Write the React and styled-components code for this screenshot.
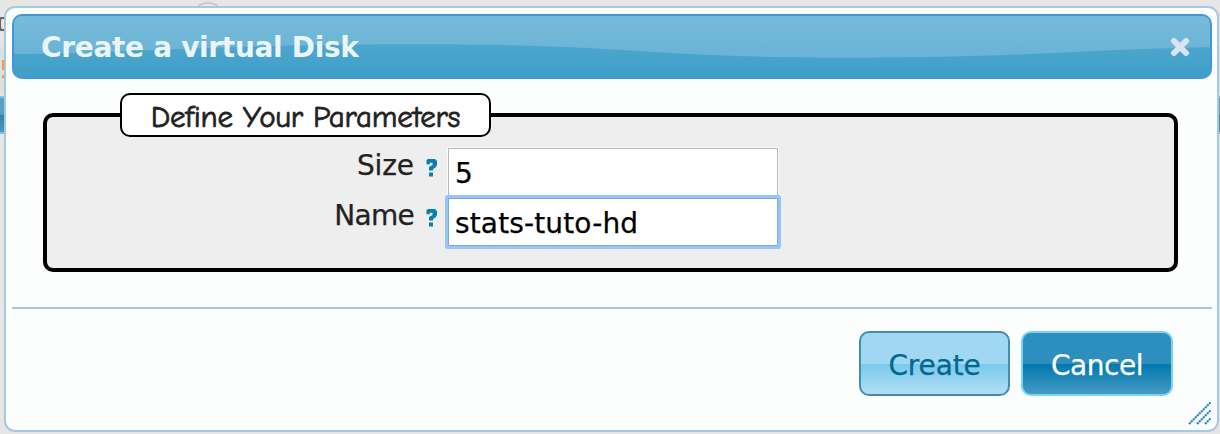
import React from 'react';
import styled, { createGlobalStyle, css } from 'styled-components';

const GlobalStyle = createGlobalStyle`
  * { box-sizing: border-box; }
  body {
    margin: 0;
    background: #e6e6e6;
    font-family: Verdana, "DejaVu Sans", sans-serif;
    overflow: hidden;
  }
`;

const Page = styled.div`
  position: relative;
  height: 434px;
  padding: 6px 1px 2px 4px;
  overflow: hidden;
`;

const Backdrop = styled.div`
  position: absolute;
  inset: 0;
  display: flex;
  flex-direction: column;
  overflow: hidden;
`;

const BackdropRow = styled.div`
  flex: none;
  height: ${(p) => p.$h}px;
  background: ${(p) => p.$bg || 'transparent'};
  border-style: solid;
  border-width: ${(p) => (p.$line ? '2px 0' : '0')};
  border-color: #7cc4e4;
`;

const Dialog = styled.section`
  position: relative;
  display: flex;
  flex-direction: column;
  height: 426px;
  padding: 6px 5px 6px 6px;
  border: 2px solid #a6c9e2;
  border-radius: 11px;
  background: #fcfdfd;
`;

const TitleBar = styled.header`
  position: relative;
  flex: none;
  display: flex;
  align-items: center;
  justify-content: space-between;
  height: 65px;
  padding: 0 20px 0 27px;
  border: 2px solid #4297d7;
  border-radius: 10px;
  background: linear-gradient(#5aaccf, #3f9fc9);
  overflow: hidden;
`;

const Gloss = styled.svg`
  position: absolute;
  inset: 0;
  width: 100%;
  height: 100%;
`;

const Title = styled.h1`
  position: relative;
  margin: 0;
  padding-top: 2px;
  color: #eaf5f7;
  font-size: 28px;
  font-weight: 700;
  line-height: 36px;
  letter-spacing: ${(p) => p.$track}px;
  white-space: nowrap;
`;

const CloseIcon = styled.svg`
  position: relative;
  display: block;
  width: 20px;
  height: 20px;
`;

const Content = styled.div`
  flex: none;
  height: 228px;
  padding: 14px 34px 0 31px;
`;

const Fieldset = styled.fieldset`
  height: 179px;
  min-width: 0;
  margin: 0;
  padding: 11px 0 0;
  border: 4px solid #000;
  border-radius: 10px;
  background: #eee;
`;

const Legend = styled.legend`
  display: flex;
  align-items: center;
  justify-content: center;
  width: 371px;
  height: 44px;
  margin-left: 73px;
  padding: 3px 0 0;
  border: 2px solid #000;
  border-radius: 10px;
  background: #fff;
  color: #222;
  font-family: "Comic Sans MS", "Comic Neue", "Open Sans", sans-serif;
  font-size: 31px;
  line-height: 36px;
  letter-spacing: -0.25px;
  white-space: nowrap;
  -webkit-text-stroke: 0.8px #222;
`;

const Field = styled.label`
  display: flex;
  height: 50px;
`;

const FieldLabel = styled.span`
  width: 367px;
  color: #222;
  font-size: 28px;
  line-height: 35px;
  letter-spacing: ${(p) => p.$track}px;
  text-align: right;
  white-space: nowrap;
  -webkit-text-stroke: 0.25px currentColor;
`;

const HelpIcon = styled.svg`
  flex: none;
  width: 14px;
  height: 20px;
  margin: 10px 9px 0 11px;
`;

const Input = styled.input`
  width: 330px;
  height: 48px;
  margin: 0;
  padding: 2px 6px 0;
  border: 1px solid #b9b9b9;
  outline: none;
  background: #fff;
  box-shadow: 0 0 0 1px #fafafa;
  color: #000;
  font-family: inherit;
  font-size: 28px;
  letter-spacing: ${(p) => p.$track}px;
  -webkit-text-stroke: 0.25px currentColor;
  ${(p) =>
    p.$focused &&
    css`
      z-index: 1;
      border-color: #7aa7dc;
      box-shadow: 0 0 0 3px #97c5f8;
      border-radius: 1px;
    `}
`;

const Footer = styled.footer`
  flex: none;
  display: flex;
  justify-content: flex-end;
  gap: 11px;
  padding: 22px 39px 0 0;
  border-top: 2px solid #a6c9e2;
`;

const Button = styled.button`
  width: ${(p) => (p.$primary ? 151 : 152)}px;
  height: 65px;
  padding: 5px 0 0;
  border: 2px solid ${(p) => (p.$primary ? '#448dae' : '#77d5f7')};
  border-radius: 10px;
  background: ${(p) =>
    p.$primary
      ? 'linear-gradient(#a1d8f1 0, #a1d8f1 33px, #79c9ec 33px, #b5e0f4 100%)'
      : 'linear-gradient(#2d8fbe 0, #2d8fbe 33px, #0078ae 33px, #4a9dc4 100%)'};
  background-origin: border-box;
  color: ${(p) => (p.$primary ? '#026890' : '#fff')};
  font-family: inherit;
  font-size: 28px;
  line-height: 32px;
  letter-spacing: ${(p) => p.$track}px;
  -webkit-text-stroke: 0.25px currentColor;
`;

const ResizeGrip = styled.svg`
  position: absolute;
  right: 6px;
  bottom: 5px;
  width: 24px;
  height: 24px;
`;

function Help() {
  return (
    <HelpIcon viewBox="0 0 14 20" aria-hidden="true">
      <path
        d="M1.5 2 L3 1 H10 L12 3 V7 L10.5 9.5 L8 11 V12.5 H4 V9 L7.5 7 V4.8 H4.8 V6.2 H1.5 Z"
        fill="#0a80b0"
      />
      <rect x="4" y="14.5" width="4" height="4" fill="#0a80b0" />
    </HelpIcon>
  );
}

export default function App() {
  return (
    <Page>
      <GlobalStyle />
      <Backdrop aria-hidden="true">
        <BackdropRow $h={47} />
        <BackdropRow $h={45} $bg="#dce1df" />
        <BackdropRow $h={4} />
        <BackdropRow $h={38} $line $bg="linear-gradient(#5aa0bf 48%, #2f83aa 50%, #5298b8)" />
      </Backdrop>
      <Gloss viewBox="0 0 1220 434" aria-hidden="true">
        <ellipse cx="208" cy="8" rx="10" ry="5" fill="none" stroke="#c9c9c9" strokeWidth="2" />
        <path d="M4 18 H1 L0 20 V27 L1 30 H4" fill="none" stroke="#666" strokeWidth="2" />
        <path d="M2 60 H4 V70 H2 Z M2 76 L4 74 V78 H2 Z" fill="#eda030" />
      </Gloss>
      <Dialog role="dialog" aria-label="Create a virtual Disk">
        <TitleBar>
          <Gloss viewBox="0 0 1196 61" preserveAspectRatio="none" aria-hidden="true">
            <defs>
              <linearGradient id="gloss" x1="0" y1="0" x2="0" y2="1">
                <stop offset="0" stopColor="#77bbd9" />
                <stop offset="1" stopColor="#69b3d6" />
              </linearGradient>
            </defs>
            <path
              d="M0 0 H1196 V31.2 C1150 32 1100 34 1060 36 C1000 39 930 41.5 830 41.8 C740 41.5 690 39 640 36 C560 31 500 28.3 390 28.3 C300 28.3 220 31 150 33.5 C90 36 50 38 0 38 Z"
              fill="url(#gloss)"
            />
          </Gloss>
          <Title $track={-0.32}>Create a virtual Disk</Title>
          <CloseIcon viewBox="0 0 20 20" aria-hidden="true">
            <path d="M4 4 L16 16 M16 4 L4 16" stroke="#d8e3f4" strokeWidth="6" strokeLinecap="round" />
          </CloseIcon>
        </TitleBar>
        <Content>
          <Fieldset>
            <Legend>Define Your Parameters</Legend>
            <Field>
              <FieldLabel $track={-0.1}>Size</FieldLabel>
              <Help />
              <Input defaultValue="5" $track={0} />
            </Field>
            <Field>
              <FieldLabel $track={-0.7}>Name</FieldLabel>
              <Help />
              <Input defaultValue="stats-tuto-hd" $focused $track={0.14} />
            </Field>
          </Fieldset>
        </Content>
        <Footer>
          <Button type="button" $primary $track={-0.15}>Create</Button>
          <Button type="button" $track={-0.45}>Cancel</Button>
        </Footer>
        <ResizeGrip viewBox="0 0 24 24" aria-hidden="true">
          <path
            d="M2 23 L24 1 M10 23 L24 9 M18 23 L24 17"
            stroke="#2b8ab8"
            strokeWidth="2.2"
            strokeDasharray="2.2 0.63"
          />
        </ResizeGrip>
      </Dialog>
    </Page>
  );
}
